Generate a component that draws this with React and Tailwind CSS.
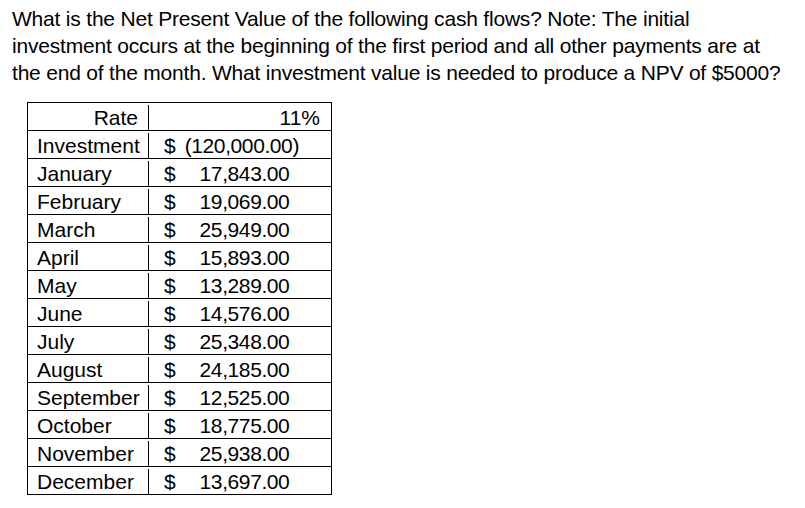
import React from 'react';

const rows = [
  ['Investment', '(120,000.00)', true],
  ['January', '17,843.00'],
  ['February', '19,069.00'],
  ['March', '25,949.00'],
  ['April', '15,893.00'],
  ['May', '13,289.00'],
  ['June', '14,576.00'],
  ['July', '25,348.00'],
  ['August', '24,185.00'],
  ['September', '12,525.00'],
  ['October', '18,775.00'],
  ['November', '25,938.00'],
  ['December', '13,697.00'],
];

const App = () => {
  return (
    <div
      className="w-[805px] h-[508px] bg-white text-black pl-[12px] pt-[5px]"
      style={{ fontFamily: '"Liberation Sans", Arial, sans-serif' }}
    >
      <p className="text-[21px] leading-[27px] whitespace-nowrap tracking-[-0.2px]">
        What is the Net Present Value of the following cash flows? Note: The initial
        <br />
        investment occurs at the beginning of the first period and all other payments are at
        <br />
        the end of the month. What investment value is needed to produce a NPV of $5000?
      </p>

      <div className="mt-[16px] ml-[15px] w-[305px] border border-black text-[21px]">
        <div className="flex h-[27px] leading-[25px] pt-[2px]">
          <div className="w-[121px] border-r border-black text-right pr-[10px]">Rate</div>
          <div className="flex-1 text-right pr-[11px]">11%</div>
        </div>
        {rows.map(([label, value, negative], i) => (
          <div key={i} className="flex h-[28px] leading-[25px] pt-[2px] border-t border-black">
            <div className="w-[121px] border-r border-black pl-[9px] whitespace-nowrap">{label}</div>
            <div className="flex-1 flex justify-between pl-[15px] pr-[32px]">
              <span>$</span>
              {negative ? (
                <span className="tracking-[-0.4px]">{value}</span>
              ) : (
                <span className="tracking-[-0.4px] pr-[3px]">
                  {value}
                  <span className="invisible">)</span>
                </span>
              )}
            </div>
          </div>
        ))}
      </div>
    </div>
  );
};

export default App;
